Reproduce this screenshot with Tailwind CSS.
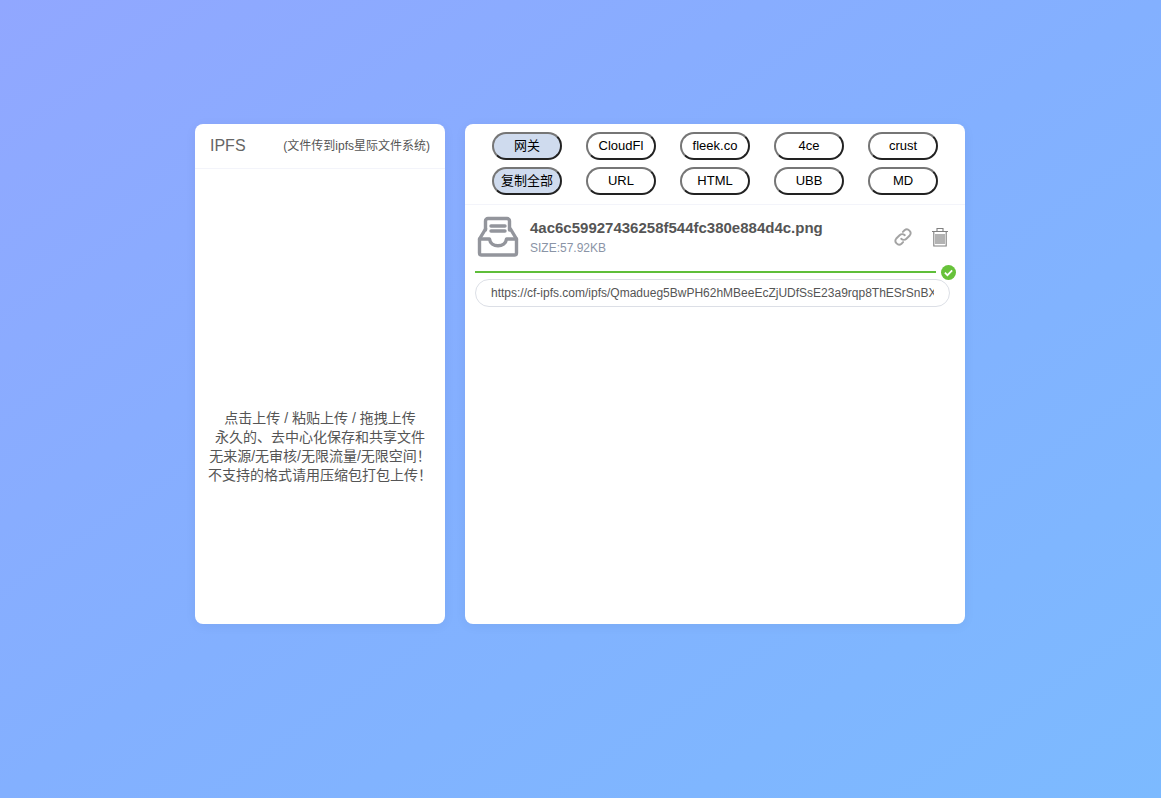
<!DOCTYPE html>
<html>
<head>
<meta charset="utf-8">
<script src="https://cdn.jsdelivr.net/npm/@tailwindcss/browser@4"></script>
</head>
<body class="m-0 w-full h-[798px] overflow-hidden bg-gradient-to-br from-[#91a7ff] via-[#83b0ff] to-[#7cbaff] font-['Liberation_Sans','Noto_Sans_CJK_SC',sans-serif] text-[#555]">
<div class="flex justify-center gap-5 pt-[124px] pr-[1px]">
  <section class="w-[250px] h-[500px] bg-white rounded-lg shadow-[0_2px_12px_rgba(0,0,0,0.05)] flex flex-col">
    <header class="h-[45px] border-b border-[#f3f4fa] flex items-center justify-between pl-[15px] pr-[15px]">
      <span class="text-base text-[#666]">IPFS</span>
      <span class="text-xs text-[#555]">(文件传到ipfs星际文件系统)</span>
    </header>
    <div class="flex-1 flex items-center justify-center pt-[101px]">
      <p class="text-center text-sm leading-[19px] text-[#555]">点击上传 / 粘贴上传 / 拖拽上传<br>永久的、去中心化保存和共享文件<br>无来源/无审核/无限流量/无限空间！<br>不支持的格式请用压缩包打包上传！</p>
    </div>
  </section>
  <section class="w-[500px] h-[500px] bg-white rounded-lg shadow-[0_2px_12px_rgba(0,0,0,0.05)]">
    <div class="h-[81px] border-b border-[#f3f4fa] pt-2 grid grid-cols-[70px_70px_70px_70px_70px] justify-center gap-x-6 gap-y-[7px] content-start text-[13px] text-black">
      <button class="h-7 rounded-full border-2 border-t-[#767676] border-l-[#767676] border-r-[#222] border-b-[#222] bg-[#cfdbee]">网关</button>
      <button class="h-7 rounded-full border-2 border-t-[#767676] border-l-[#767676] border-r-[#222] border-b-[#222] bg-white">CloudFl</button>
      <button class="h-7 rounded-full border-2 border-t-[#767676] border-l-[#767676] border-r-[#222] border-b-[#222] bg-white">fleek.co</button>
      <button class="h-7 rounded-full border-2 border-t-[#767676] border-l-[#767676] border-r-[#222] border-b-[#222] bg-white">4ce</button>
      <button class="h-7 rounded-full border-2 border-t-[#767676] border-l-[#767676] border-r-[#222] border-b-[#222] bg-white">crust</button>
      <button class="h-7 rounded-full border-2 border-t-[#767676] border-l-[#767676] border-r-[#222] border-b-[#222] bg-[#cfdbee]">复制全部</button>
      <button class="h-7 rounded-full border-2 border-t-[#767676] border-l-[#767676] border-r-[#222] border-b-[#222] bg-white">URL</button>
      <button class="h-7 rounded-full border-2 border-t-[#767676] border-l-[#767676] border-r-[#222] border-b-[#222] bg-white">HTML</button>
      <button class="h-7 rounded-full border-2 border-t-[#767676] border-l-[#767676] border-r-[#222] border-b-[#222] bg-white">UBB</button>
      <button class="h-7 rounded-full border-2 border-t-[#767676] border-l-[#767676] border-r-[#222] border-b-[#222] bg-white">MD</button>
    </div>
    <div class="px-[10px] pt-[10px]">
      <div class="flex items-center h-[44px]">
        <svg class="w-11 h-11 ml-[1px] shrink-0" viewBox="0 0 44 44" fill="none" stroke="#93959c" stroke-width="3.4" stroke-linejoin="round" stroke-linecap="round">
          <path d="M9.500 15V6a2.500 2.500 0 0 1 2.500-2.500h19a2.500 2.500 0 0 1 2.500 2.500v9"/>
          <path d="M15 11h14M15 16h14"/>
          <path d="M9.500 14 3.500 24v14a2 2 0 0 0 2 2h33a2 2 0 0 0 2-2V24l-6-10"/>
          <path d="M3.500 24h10c1 9 16 9 17 0h10"/>
        </svg>
        <div class="ml-[10px] flex-1">
          <div class="text-[15px] font-bold text-[#555] leading-[18px]">4ac6c59927436258f544fc380e884d4c.png</div>
          <div class="text-xs text-[#8a94a6] leading-4 mt-[3px]">SIZE:57.92KB</div>
        </div>
        <svg class="w-5 h-5 mr-[18px] shrink-0" viewBox="0 0 20 20" fill="none" stroke="#a3a3a3" stroke-width="1.900" stroke-linecap="round">
          <path d="M8.200 11.800a3.700 3.700 0 0 0 5.200 0l3.300-3.300a3.700 3.700 0 0 0-5.200-5.200l-1.600 1.600"/>
          <path d="M11.800 8.200a3.700 3.700 0 0 0-5.200 0l-3.300 3.300a3.700 3.700 0 0 0 5.200 5.200l1.600-1.600"/>
        </svg>
        <svg class="w-[18px] h-5 mr-[6px] shrink-0" viewBox="0 0 18 20" fill="none" stroke="#808080">
          <path d="M1 4.500h16M6 4V1.500h6V4M2.800 4.500v14.500h12.400V4.500" stroke-width="1.100"/>
          <path d="M5 7v10M7 7v10M9 7v10M11 7v10M13 7v10" stroke-width="1.200"/>
        </svg>
      </div>
      <div class="flex items-center mt-[5px] h-4">
        <div class="w-[461px] h-[2px] bg-[#5fbe3a] shrink-0"></div>
        <svg class="w-[15px] h-[15px] ml-[5px] shrink-0" viewBox="0 0 14 14"><circle cx="7" cy="7" r="7" fill="#67c23a"/><path d="M3.600 7.200 6 9.500l4.400-4.500" fill="none" stroke="#fff" stroke-width="1.600"/></svg>
      </div>
      <input readonly value="https://cf-ipfs.com/ipfs/Qmadueg5BwPH62hMBeeEcZjUDfSsE23a9rqp8ThESrSnBXyz123456" class="block w-[475px] h-7 mt-[-1px] rounded-full border border-[#dcdfe6] px-[15px] text-xs text-[#555] outline-none">
    </div>
  </section>
</div>
</body>
</html>
